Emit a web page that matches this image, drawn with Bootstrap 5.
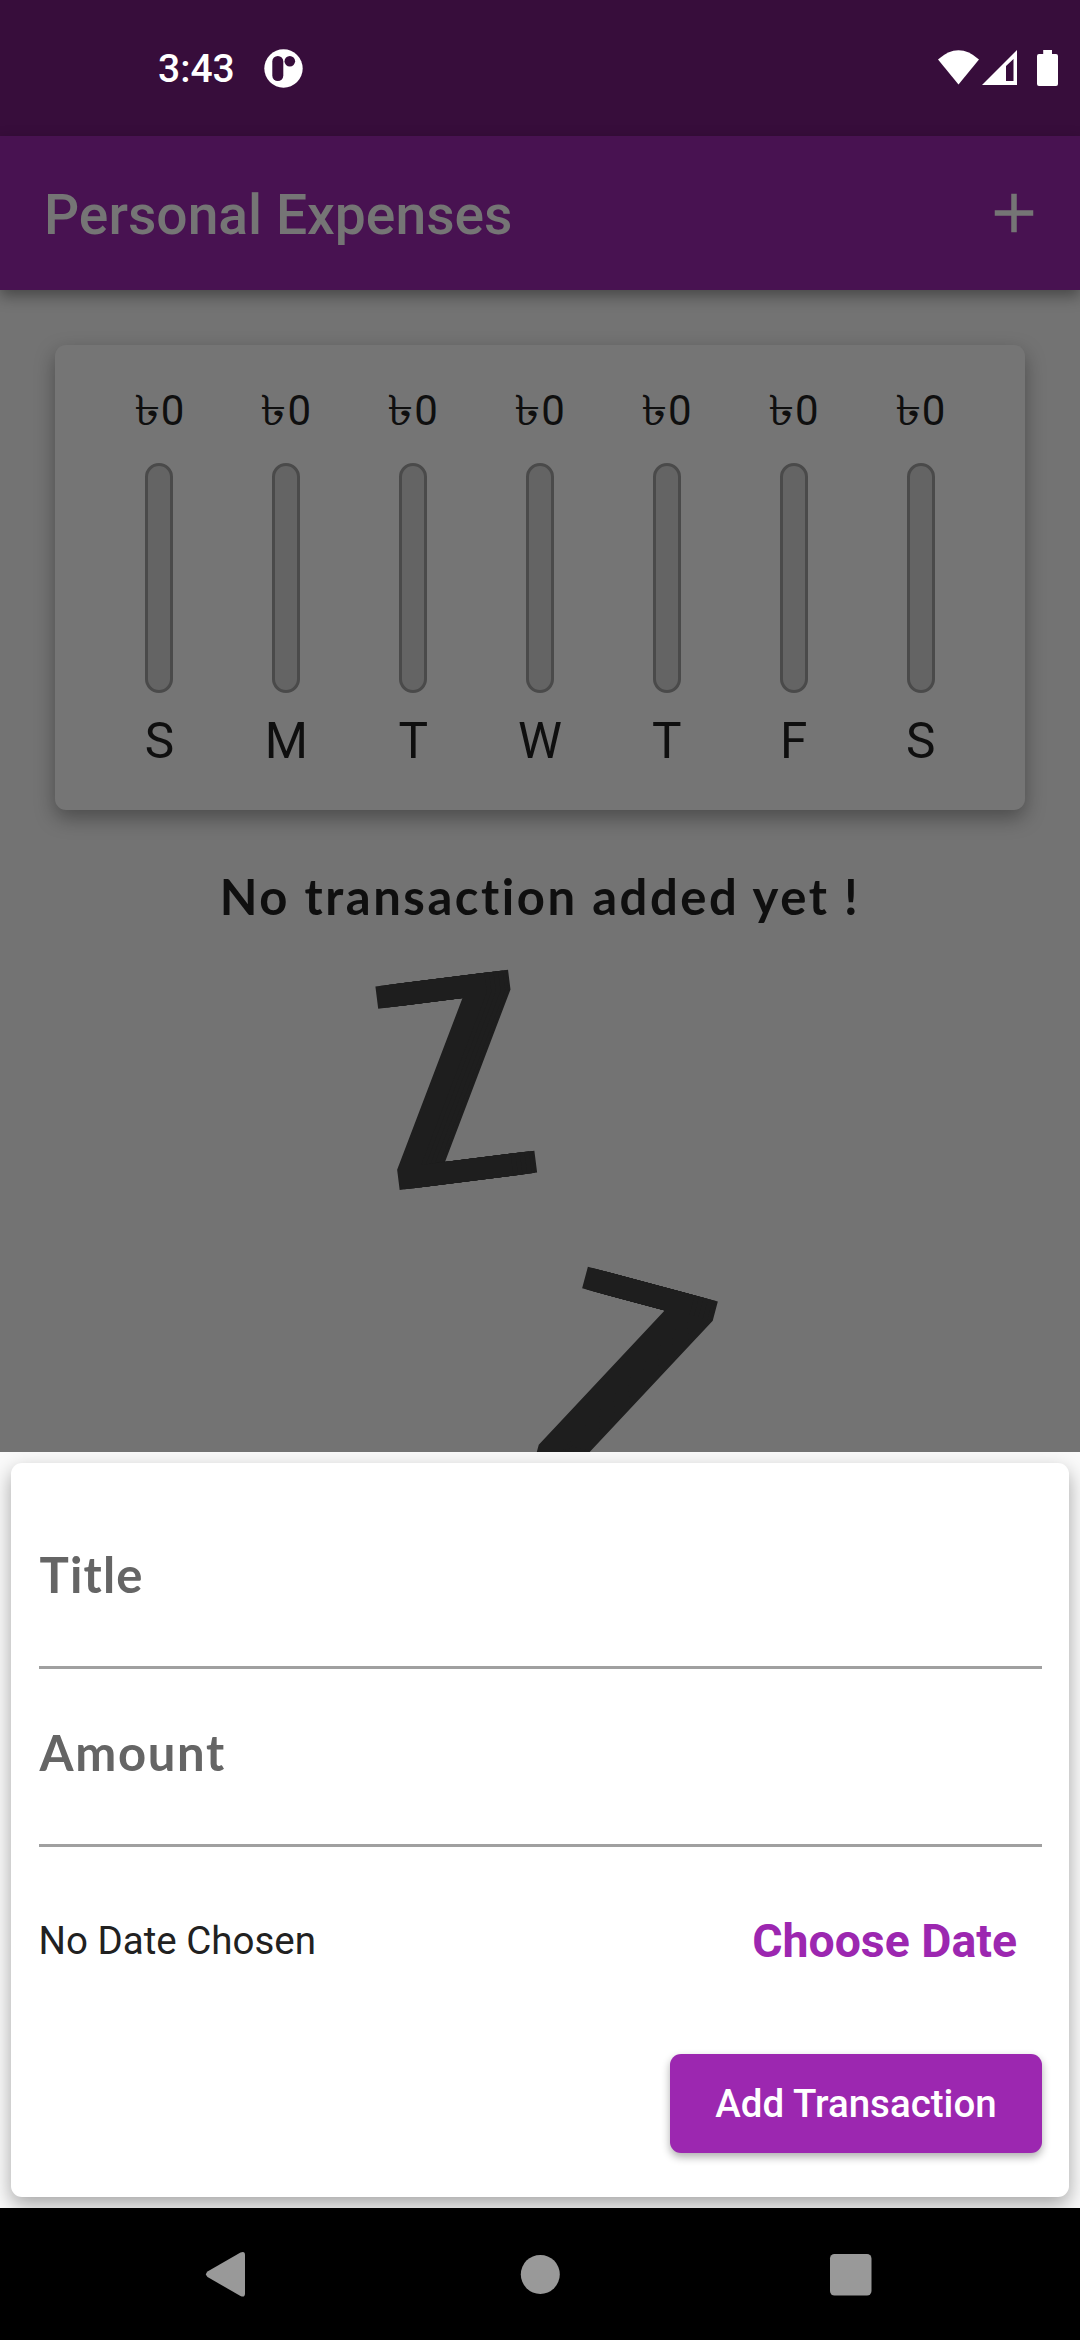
<!DOCTYPE html>
<html lang="en">
<head>
<meta charset="utf-8">
<meta name="viewport" content="width=device-width, initial-scale=1">
<title>Personal Expenses</title>
<link rel="stylesheet" href="https://cdn.jsdelivr.net/npm/bootstrap@5.3.0/dist/css/bootstrap.min.css">
<style>
  body { width: 1080px; height: 2340px; font-family: Roboto, sans-serif; background: #737373; overflow: hidden; }
  .status-bar { height: 136px; background: #370d3b; padding: 0 22px 0 158px; }
  .clock { font-size: 39px; line-height: 60px; font-weight: 500; padding-top: 2px; }
  .chip-icon { margin-left: 29px; }
  .app-bar { height: 154px; background: #481251; padding: 2px 33px 0 44px; color: #757575; box-shadow: 0 6px 14px rgba(0,0,0,.38); z-index: 1; }
  .app-title { font-size: 55.2px; line-height: 66px; font-weight: 500; padding-top: 1px; }
  .plus-icon { margin-bottom: 3px; }
  .page-area { height: 1161.5px; background: #737373; padding: 55px 55px 0; }
  .week-card { height: 465px; border: 0; border-radius: 11px; background: #757575; padding: 36px 41px 0; box-shadow: 0 8px 20px rgba(0,0,0,.34); color: #0f0f0f; }
  .spent { font-size: 42px; line-height: 60px; margin-bottom: 22px; padding-left: 2px; }
  .taka { transform: scaleX(1.27); transform-origin: 60% 50%; margin-right: 3px; }
  .meter { width: 28px; height: 230px; border: 3px solid #4a4a4a; border-radius: 14px; background: #646464; }
  .weekday { font-size: 49.5px; line-height: 60px; margin-top: 18px; }
  .round-face { font-family: Lato, sans-serif; font-weight: 700; font-size: 49px; line-height: 60px; }
  .empty-note { margin-top: 56px; color: #0f0f0f; letter-spacing: 2.55px; }
  .sleep-art { height: 520px; }
  /* Each Z is widened along its own baseline by stacked shadows */
  .snore { top: 0; left: 0; font-size: 288px; line-height: 288px; color: #1e1e1e; transform-origin: 0 0;
    text-shadow: 6px 0, 12px 0, 18px 0, 24px 0, 28px 0, 31px 0; }
  .snore-one { transform: translate(305px, 25px) rotate(-7.2deg) scaleX(.77); }
  .snore-two { transform: translate(532px, 302px) rotate(15deg) scaleX(.775); }
  .sheet { height: 756.5px; background: #fafafa; padding: 11px; z-index: 2; }
  .sheet-card { height: 734.5px; border: 0; border-radius: 11px; background: #fff; padding: 0 27px 0 27.5px; box-shadow: 0 8px 20px rgba(0,0,0,.34); }
  .field { border-bottom: 3px solid #a0a0a0; color: #656565; }
  .field-title { height: 206px; padding: 81px 0 0 1px; letter-spacing: 1.2px; }
  .field-amount { height: 178px; padding: 53px 0 0 1px; letter-spacing: 1.7px; }
  .date-row { height: 188.5px; padding: 1px 25px 0 0; }
  .date-text { font-size: 38.5px; color: #212121; }
  .btn-date { font-size: 46.4px; font-weight: 700; color: #9c27b0; line-height: 60px; padding: 0; border: 0; }
  .btn-add { width: 372px; height: 99px; margin-top: 19px; padding: 1px 0 0; border: 0; border-radius: 11px; background: #9c27b0; color: #fff; font-size: 38.5px; font-weight: 500; box-shadow: 0 4px 8px rgba(0,0,0,.32); }
  .nav-keys { height: 132px; background: #000; z-index: 3; }
</style>
<script src="https://cdn.jsdelivr.net/npm/bootstrap@5.3.0/dist/js/bootstrap.bundle.min.js"></script>
</head>
<body class="d-flex flex-column m-0">
  <header class="status-bar d-flex align-items-center text-white flex-shrink-0">
    <span class="clock">3:43</span>
    <svg class="chip-icon" width="39" height="39" viewBox="0 0 39 39"><circle cx="19.5" cy="19.5" r="19.2" fill="#fff"/><rect x="8.3" y="7" width="11" height="25" rx="5.5" fill="#370d3b"/><circle cx="25.8" cy="12.3" r="5.3" fill="#370d3b"/></svg>
    <svg class="ms-auto" width="120" height="38" viewBox="938 49 120 38" fill="#fff">
      <path d="M938 59.5Q958.5 41 979 59.5L958.5 84.5Z"/>
      <path fill-rule="evenodd" d="M982 85L1017 50V85ZM1006 66V81H1013.5V59Z"/>
      <path d="M1043.2 50h8.8v4h4q2 0 2 2v28q0 2-2 2h-17q-2 0-2-2V56q0-2 2-2h4.200Z"/>
    </svg>
  </header>
  <nav class="app-bar d-flex align-items-center justify-content-between flex-shrink-0 position-relative">
    <span class="app-title">Personal Expenses</span>
    <svg class="plus-icon" width="66" height="66" viewBox="0 0 24 24" fill="#757575"><path d="M19 13h-6v6h-2v-6H5v-2h6V5h2v6h6z"/></svg>
  </nav>
  <main class="page-area flex-shrink-0 overflow-hidden">
    <section class="card week-card flex-row">
      <div class="flex-fill d-flex flex-column align-items-center w-100"><div class="spent"><span class="taka d-inline-block">৳</span>0</div><div class="meter"></div><div class="weekday">S</div></div>
      <div class="flex-fill d-flex flex-column align-items-center w-100"><div class="spent"><span class="taka d-inline-block">৳</span>0</div><div class="meter"></div><div class="weekday">M</div></div>
      <div class="flex-fill d-flex flex-column align-items-center w-100"><div class="spent"><span class="taka d-inline-block">৳</span>0</div><div class="meter"></div><div class="weekday">T</div></div>
      <div class="flex-fill d-flex flex-column align-items-center w-100"><div class="spent"><span class="taka d-inline-block">৳</span>0</div><div class="meter"></div><div class="weekday">W</div></div>
      <div class="flex-fill d-flex flex-column align-items-center w-100"><div class="spent"><span class="taka d-inline-block">৳</span>0</div><div class="meter"></div><div class="weekday">T</div></div>
      <div class="flex-fill d-flex flex-column align-items-center w-100"><div class="spent"><span class="taka d-inline-block">৳</span>0</div><div class="meter"></div><div class="weekday">F</div></div>
      <div class="flex-fill d-flex flex-column align-items-center w-100"><div class="spent"><span class="taka d-inline-block">৳</span>0</div><div class="meter"></div><div class="weekday">S</div></div>
    </section>
    <div class="round-face empty-note text-center">No transaction added yet !</div>
    <div class="sleep-art position-relative">
      <span class="snore snore-one position-absolute">Z</span>
      <span class="snore snore-two position-absolute">Z</span>
    </div>
  </main>
  <section class="sheet position-relative flex-shrink-0 overflow-hidden">
    <div class="card sheet-card">
      <div class="field field-title round-face">Title</div>
      <div class="field field-amount round-face">Amount</div>
      <div class="date-row d-flex align-items-center justify-content-between">
        <span class="date-text">No Date Chosen</span>
        <button class="btn btn-date">Choose Date</button>
      </div>
      <button class="btn btn-add align-self-end">Add Transaction</button>
    </div>
  </section>
  <footer class="nav-keys flex-shrink-0">
    <svg class="d-block" width="1080" height="132" viewBox="0 2208 1080 132" fill="#999">
      <path d="M207.500 2271.500L240.500 2252.500Q245 2250.500 245 2255V2293.500Q245 2298 240.500 2296L207.500 2277Q204.500 2274.300 207.500 2271.500Z"/>
      <circle cx="540.3" cy="2274.4" r="19.5"/>
      <rect x="830" y="2254" width="41.500" height="41.500" rx="4.500"/>
    </svg>
  </footer>
</body>
</html>
